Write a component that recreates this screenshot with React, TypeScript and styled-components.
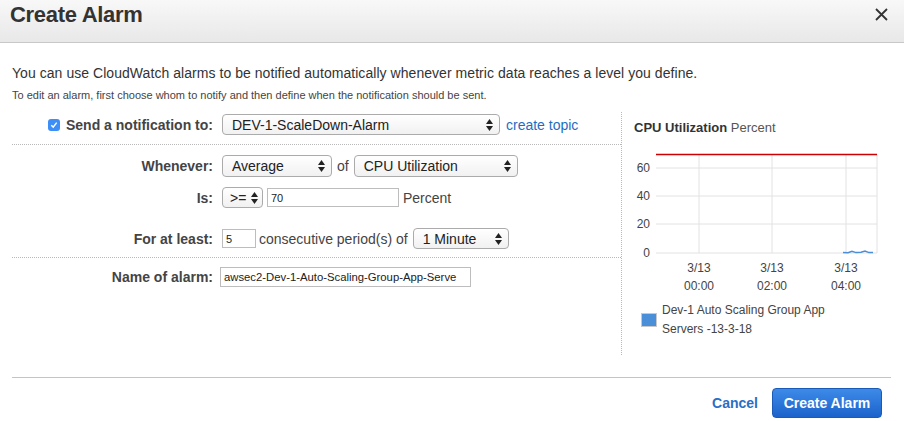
import React from 'react';
import styled, { createGlobalStyle } from 'styled-components';

const Global = createGlobalStyle`
  html, body { margin: 0; padding: 0; background: #fff; }
  body { font-family: "Liberation Sans", Arial, Helvetica, sans-serif; color: #333; }
  * { box-sizing: border-box; }
`;

const Dialog = styled.div`
  width: 904px;
  height: 421px;
  overflow: hidden;
  background: #fff;
  display: flex;
  flex-direction: column;
`;

const Header = styled.header`
  height: 43px;
  flex: none;
  border-bottom: 1px solid #c8c8c8;
  background: linear-gradient(#f8f8f8, #e8e8e8);
  display: flex;
  align-items: flex-start;
  justify-content: space-between;
  padding: 4px 16px 0 10px;
`;

const Title = styled.h1`
  margin: 0;
  font-size: 22px;
  line-height: 22px;
  font-weight: bold;
  color: #333;
  letter-spacing: -0.3px;
`;

const Close = styled.button`
  border: 0;
  background: none;
  padding: 0;
  margin-top: 4px;
  width: 13px;
  height: 13px;
  display: block;
  cursor: pointer;
`;

const Body = styled.div`
  padding: 0 12px;
`;

const Intro = styled.p`
  margin: 21px 0 0;
  font-size: 14px;
  line-height: 18px;
  color: #333;
  letter-spacing: 0.05px;
`;

const Sub = styled.p`
  margin: 6px 0 0;
  font-size: 11px;
  line-height: 14px;
  color: #444;
`;

const Main = styled.div`
  display: flex;
  margin-top: 8px;
`;

const FormCol = styled.div`
  width: 609px;
  flex: none;
`;

const Section = styled.div<{ $pt: number; $pb: number; $divider?: boolean }>`
  padding-top: ${p => p.$pt}px;
  padding-bottom: ${p => p.$pb}px;
  border-bottom: ${p => (p.$divider ? '1px dotted #b8b8b8' : 'none')};
`;

const Row = styled.div<{ $h: number; $mt?: number }>`
  display: flex;
  align-items: center;
  height: ${p => p.$h}px;
  margin-top: ${p => p.$mt ?? 0}px;
`;

const Label = styled.label`
  width: 201px;
  flex: none;
  margin-right: 9px;
  display: flex;
  align-items: center;
  justify-content: flex-end;
  font-size: 14px;
  font-weight: bold;
  color: #444;
  white-space: nowrap;
`;

const Check = styled.span`
  width: 12px;
  height: 12px;
  border-radius: 3px;
  background: #3d8ef7;
  margin-right: 6px;
  display: inline-flex;
  align-items: center;
  justify-content: center;
`;

const SelectBox = styled.div<{ $w: number; $h?: number; $compact?: boolean }>`
  width: ${p => p.$w}px;
  height: ${p => p.$h ?? 22}px;
  flex: none;
  border: 1px solid #ababab;
  border-radius: 4px;
  background: linear-gradient(#ffffff, #f1f1f1);
  display: flex;
  align-items: center;
  justify-content: space-between;
  padding: ${p => (p.$compact ? '0 4px 0 7px' : '0 6px 0 9px')};
  font-size: 14px;
  color: #222;
  white-space: nowrap;
  overflow: hidden;
`;

const Input = styled.div<{ $w: number; $h?: number; $fs?: number; $ml?: number }>`
  width: ${p => p.$w}px;
  height: ${p => p.$h ?? 19}px;
  flex: none;
  margin-left: ${p => p.$ml ?? 0}px;
  border: 1px solid #bdbdbd;
  background: #fff;
  display: flex;
  align-items: center;
  padding: 0 3px;
  font-size: ${p => p.$fs ?? 11}px;
  color: #222;
  white-space: nowrap;
  overflow: hidden;
`;

const Text = styled.span<{ $mx?: string }>`
  font-size: 14px;
  color: #444;
  margin: ${p => p.$mx ?? '0'};
  white-space: nowrap;
`;

const Link = styled.a`
  font-size: 14px;
  color: #1f6dc2;
  margin-left: 6px;
  text-decoration: none;
  white-space: nowrap;
`;

const ChartPanel = styled.div`
  flex: 1;
  margin-top: 2px;
  height: 243px;
  border-left: 1px dotted #b8b8b8;
  padding-left: 12px;
  padding-top: 8px;
`;

const ChartTitle = styled.div`
  font-size: 13px;
  line-height: 16px;
  color: #555;
  b { color: #333; }
`;

const ChartSvg = styled.svg`
  display: block;
  margin-top: 9px;
`;

const Legend = styled.div`
  display: flex;
  align-items: flex-start;
  margin-top: 6px;
  padding-left: 7px;
`;

const Swatch = styled.span`
  width: 16px;
  height: 14px;
  margin-top: 12px;
  flex: none;
  background: #4a8fd8;
  border: 1px solid #c9c9c9;
`;

const LegendText = styled.div`
  margin-left: 5px;
  width: 190px;
  font-size: 12px;
  line-height: 19px;
  color: #444;
`;

const Footer = styled.footer`
  margin: 22px 13px 0 12px;
  border-top: 1px solid #c4c4c4;
  display: flex;
  justify-content: flex-end;
  align-items: center;
  gap: 14px;
  padding: 10px 9px 0 0;
`;

const Cancel = styled.a`
  font-size: 14px;
  font-weight: bold;
  color: #2a6ec6;
  text-decoration: none;
`;

const Primary = styled.button`
  width: 110px;
  height: 30px;
  border: 1px solid #1a5bb8;
  border-radius: 4px;
  background: linear-gradient(#3d8ae8, #1b63cb);
  color: #fff;
  font-family: inherit;
  font-size: 14px;
  font-weight: bold;
  padding: 0;
`;

const Arrows = () => (
  <svg width="7" height="12" viewBox="0 0 7 12">
    <polygon points="0,5 3.5,0 7,5" fill="#222" />
    <polygon points="0,7 3.5,12 7,7" fill="#222" />
  </svg>
);

const Select = ({ w, h, value, compact }: { w: number; h?: number; value: string; compact?: boolean }) => (
  <SelectBox $w={w} $h={h} $compact={compact}>
    <span>{value}</span>
    <Arrows />
  </SelectBox>
);

const yTicks = [
  { v: '60', y: 23 },
  { v: '40', y: 51 },
  { v: '20', y: 79 },
  { v: '0', y: 108 },
];
const xTicks = [
  { x: 65, t: '00:00' },
  { x: 138, t: '02:00' },
  { x: 212, t: '04:00' },
];

const Chart = () => (
  <ChartSvg width="256" height="150" viewBox="0 0 256 150">
    {yTicks.map(t => (
      <g key={t.v}>
        <line x1="22" x2="243" y1={t.y} y2={t.y} stroke="#e2e2e2" strokeWidth="1" />
        <text x="16" y={t.y + 4} textAnchor="end" fontSize="12" fill="#444" fontFamily="Liberation Sans, Arial, sans-serif">
          {t.v}
        </text>
      </g>
    ))}
    {xTicks.map(t => (
      <g key={t.t}>
        <line x1={t.x} x2={t.x} y1="9" y2="108" stroke="#e2e2e2" strokeWidth="1" />
        <text x={t.x} y="127" textAnchor="middle" fontSize="12" fill="#444" fontFamily="Liberation Sans, Arial, sans-serif">
          3/13
        </text>
        <text x={t.x} y="145" textAnchor="middle" fontSize="12" fill="#444" fontFamily="Liberation Sans, Arial, sans-serif">
          {t.t}
        </text>
      </g>
    ))}
    <line x1="243" x2="243" y1="9" y2="108" stroke="#e2e2e2" strokeWidth="1" />
    <line x1="22" x2="243" y1="9.5" y2="9.5" stroke="#cc0000" strokeWidth="1.3" />
    <path
      d="M209 107.5 L214 107.8 L218 106.2 L222 107.6 L227 107.2 L231 106 L235 107.6 L239 107.4"
      fill="none"
      stroke="#4a8fd8"
      strokeWidth="1.5"
    />
  </ChartSvg>
);

export default function App() {
  return (
    <>
      <Global />
      <Dialog>
        <Header>
          <Title>Create Alarm</Title>
          <Close aria-label="Close">
            <svg width="13" height="13" viewBox="0 0 13 13">
              <path d="M1 1 L12 12 M12 1 L1 12" stroke="#333" strokeWidth="1.8" />
            </svg>
          </Close>
        </Header>
        <Body>
          <Intro>
            You can use CloudWatch alarms to be notified automatically whenever metric data reaches a level you define.
          </Intro>
          <Sub>To edit an alarm, first choose whom to notify and then define when the notification should be sent.</Sub>
          <Main>
            <FormCol>
              <Section $pt={4} $pb={9} $divider>
                <Row $h={21}>
                  <Label>
                    <Check>
                      <svg width="8" height="8" viewBox="0 0 8 8">
                        <path d="M1.3 4.2 L3.2 6.1 L6.7 1.6" fill="none" stroke="#fff" strokeWidth="1.5" />
                      </svg>
                    </Check>
                    Send a notification to:
                  </Label>
                  <Select w={278} h={21} value="DEV-1-ScaleDown-Alarm" />
                  <Link href="#">create topic</Link>
                </Row>
              </Section>
              <Section $pt={10} $pb={8} $divider>
                <Row $h={22}>
                  <Label>Whenever:</Label>
                  <Select w={110} value="Average" />
                  <Text $mx="0 5px">of</Text>
                  <Select w={164} value="CPU Utilization" />
                </Row>
                <Row $h={21} $mt={10}>
                  <Label>Is:</Label>
                  <Select w={41} h={21} value=">=" compact />
                  <Input $w={132} $ml={4}>70</Input>
                  <Text $mx="0 0 0 4px">Percent</Text>
                </Row>
                <Row $h={21} $mt={20}>
                  <Label>For at least:</Label>
                  <Input $w={34}>5</Input>
                  <Text $mx="0 5px 0 3px">consecutive period(s) of</Text>
                  <Select w={96} h={21} value="1 Minute" />
                </Row>
              </Section>
              <Section $pt={9} $pb={0}>
                <Row $h={20}>
                  <Label>Name of alarm:</Label>
                  <Input $w={251} $h={20} $ml={-2} $fs={11.3}>awsec2-Dev-1-Auto-Scaling-Group-App-Serve</Input>
                </Row>
              </Section>
            </FormCol>
            <ChartPanel>
              <ChartTitle>
                <b>CPU Utilization</b> Percent
              </ChartTitle>
              <Chart />
              <Legend>
                <Swatch />
                <LegendText>Dev-1 Auto Scaling Group App Servers -13-3-18</LegendText>
              </Legend>
            </ChartPanel>
          </Main>
        </Body>
        <Footer>
          <Cancel href="#">Cancel</Cancel>
          <Primary>Create Alarm</Primary>
        </Footer>
      </Dialog>
    </>
  );
}
